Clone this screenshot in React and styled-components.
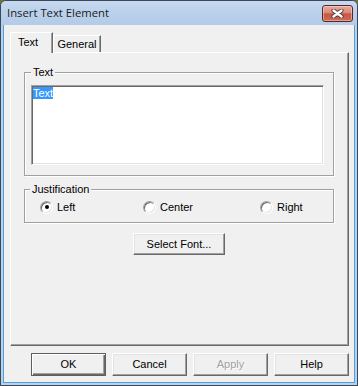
import React from 'react';
import styled, { createGlobalStyle } from 'styled-components';

const GlobalStyle = createGlobalStyle`
  html, body { margin: 0; padding: 0; background: #707338; }
  body { font-family: "Liberation Sans", Arial, sans-serif; font-size: 11px; color: #000; }
  #root { width: 358px; height: 386px; }
`;

const Window = styled.div`
  box-sizing: border-box;
  width: 358px;
  height: 386px;
  display: flex;
  flex-direction: column;
  border: 1px solid #3b4656;
  border-radius: 6px 6px 0 0;
  background: #b9d1ea;
  overflow: hidden;
`;

const TitleBar = styled.div`
  height: 24px;
  flex: none;
  display: flex;
  align-items: center;
  justify-content: space-between;
  padding-left: 6px;
  background: linear-gradient(to bottom, #c6d9ef 0%, #bcd2ec 40%, #b3cbe8 100%);
`;

const TitleText = styled.span`
  font-family: "Open Sans", "Noto Sans", sans-serif;
  font-size: 11.3px;
  color: #1b1b1b;
  line-height: 14px;
`;

const CloseButton = styled.div`
  box-sizing: border-box;
  align-self: flex-start;
  margin: 4px 4px 0 0;
  width: 31px;
  height: 17px;
  border: 1px solid #5a2622;
  border-radius: 3px;
  background: linear-gradient(to bottom, #e7aa9e 0%, #da8a7b 45%, #c75743 52%, #cc6a56 100%);
  box-shadow: inset 0 0 0 1px rgba(255, 230, 225, 0.45);
  display: flex;
  align-items: center;
  justify-content: center;
`;

const Client = styled.div`
  flex: 1;
  display: flex;
  flex-direction: column;
  margin: 0 2px 2px;
  border: 1px solid #4f9fdc;
  border-top: none;
  background: #f0f0f0;
  padding: 7px 5px 6px 6px;
`;

const TabStrip = styled.div`
  display: flex;
  align-items: flex-end;
  height: 20px;
  flex: none;
`;

const Tab = styled.div`
  box-sizing: border-box;
  position: relative;
  background: #f0f0f0;
  border-top: 1px solid #fff;
  border-left: 1px solid #fff;
  border-right: 1px solid #696969;
  box-shadow: inset -1px 0 #a0a0a0;
  line-height: 13px;
  white-space: nowrap;
  width: ${p => (p.$active ? '43px' : '48px')};
  height: ${p => (p.$active ? '21px' : '17px')};
  margin-bottom: ${p => (p.$active ? '-1px' : '0')};
  z-index: ${p => (p.$active ? 1 : 0)};
  padding: ${p => (p.$active ? '3px 0 0 7px' : '2px 0 0 0')};
  text-align: ${p => (p.$active ? 'left' : 'center')};
`;

const Panel = styled.div`
  box-sizing: border-box;
  flex: 1;
  display: flex;
  flex-direction: column;
  border-top: 1px solid #fff;
  border-left: 1px solid #fff;
  border-right: 1px solid #696969;
  border-bottom: 1px solid #696969;
  box-shadow: inset -1px -1px #a0a0a0;
  padding: 19px 14px 0 13px;
`;

const Group = styled.div`
  box-sizing: border-box;
  position: relative;
  border: 1px solid #a0a0a0;
  box-shadow: inset 1px 1px #fff, 1px 1px #fff;
  margin-top: ${p => p.$gap || 0}px;
`;

const Caption = styled.span`
  position: absolute;
  top: -7px;
  left: ${p => p.$left || 6}px;
  padding: 0 2px;
  line-height: 13px;
  background: #f0f0f0;
`;

const TextGroupBody = styled.div`
  padding: 12px 9px 10px 6px;
`;

const TextBox = styled.div`
  box-sizing: border-box;
  height: 80px;
  background: #fff;
  border: 1px solid;
  border-color: #a0a0a0 #fff #fff #a0a0a0;
  box-shadow: inset 1px 1px #696969, inset -1px -1px #e3e3e3;
  padding: 1px 0 0 1px;
  line-height: 13px;
`;

const Selected = styled.span`
  background: #3399ff;
  color: #fff;
`;

const RadioRow = styled.div`
  box-sizing: border-box;
  height: 32px;
  display: grid;
  grid-template-columns: 103px 117px 1fr;
  align-items: center;
  padding: 2px 0 0 15px;
`;

const RadioLabel = styled.label`
  display: flex;
  align-items: center;
  gap: 4px;
  line-height: 13px;
`;

const RadioDot = styled.span`
  box-sizing: border-box;
  width: 13px;
  height: 13px;
  border-radius: 50%;
  background: #fff;
  border: 1px solid;
  border-color: #a0a0a0 #fff #fff #a0a0a0;
  box-shadow: inset 1px 1px #696969, inset -1px -1px #e3e3e3;
  display: flex;
  align-items: center;
  justify-content: center;
  &::after {
    content: '';
    width: 4px;
    height: 4px;
    border-radius: 50%;
    background: ${p => (p.$checked ? '#000' : 'transparent')};
  }
`;

const Button = styled.div`
  box-sizing: border-box;
  width: ${p => p.$w || 75}px;
  height: ${p => p.$h || 23}px;
  display: flex;
  align-items: center;
  justify-content: center;
  background: #f0f0f0;
  line-height: 13px;
  color: ${p => (p.$disabled ? '#a0a0a0' : '#000')};
  text-shadow: ${p => (p.$disabled ? '1px 1px #fff' : 'none')};
  border: 1px solid;
  border-color: ${p => (p.$default ? '#5e5e5e' : '#fff #696969 #696969 #fff')};
  box-shadow: ${p =>
    p.$default
      ? 'inset 1px 1px #fff, inset -1px -1px #696969, inset -2px -2px #a0a0a0'
      : 'inset -1px -1px #a0a0a0, inset 1px 1px #e3e3e3'};
`;

const CenterButton = styled(Button)`
  align-self: center;
  margin-top: 10px;
`;

const ButtonRow = styled.div`
  flex: none;
  display: flex;
  justify-content: flex-end;
  gap: 6px;
  margin-top: 7px;
`;

const CloseGlyph = () => (
  <svg width="13" height="9" viewBox="0 0 13 9">
    <path d="M2.5 1.5 L10.5 7.5 M10.5 1.5 L2.5 7.5" stroke="#4a3a38" strokeWidth="4.2" strokeLinecap="round" fill="none" />
    <path d="M2.5 1.5 L10.5 7.5 M10.5 1.5 L2.5 7.5" stroke="#fff" strokeWidth="2.4" strokeLinecap="round" fill="none" />
  </svg>
);

export default function App() {
  return (
    <>
      <GlobalStyle />
      <Window>
        <TitleBar>
          <TitleText>Insert Text Element</TitleText>
          <CloseButton>
            <CloseGlyph />
          </CloseButton>
        </TitleBar>
        <Client>
          <TabStrip>
            <Tab $active>Text</Tab>
            <Tab>General</Tab>
          </TabStrip>
          <Panel>
            <Group>
              <Caption $left={6}>Text</Caption>
              <TextGroupBody>
                <TextBox>
                  <Selected>Text</Selected>
                </TextBox>
              </TextGroupBody>
            </Group>
            <Group $gap={13}>
              <Caption $left={5}>Justification</Caption>
              <RadioRow>
                <RadioLabel>
                  <RadioDot $checked />
                  Left
                </RadioLabel>
                <RadioLabel>
                  <RadioDot />
                  Center
                </RadioLabel>
                <RadioLabel>
                  <RadioDot />
                  Right
                </RadioLabel>
              </RadioRow>
            </Group>
            <CenterButton $w={92} $h={22}>Select Font...</CenterButton>
          </Panel>
          <ButtonRow>
            <Button $default>OK</Button>
            <Button>Cancel</Button>
            <Button $disabled>Apply</Button>
            <Button>Help</Button>
          </ButtonRow>
        </Client>
      </Window>
    </>
  );
}
